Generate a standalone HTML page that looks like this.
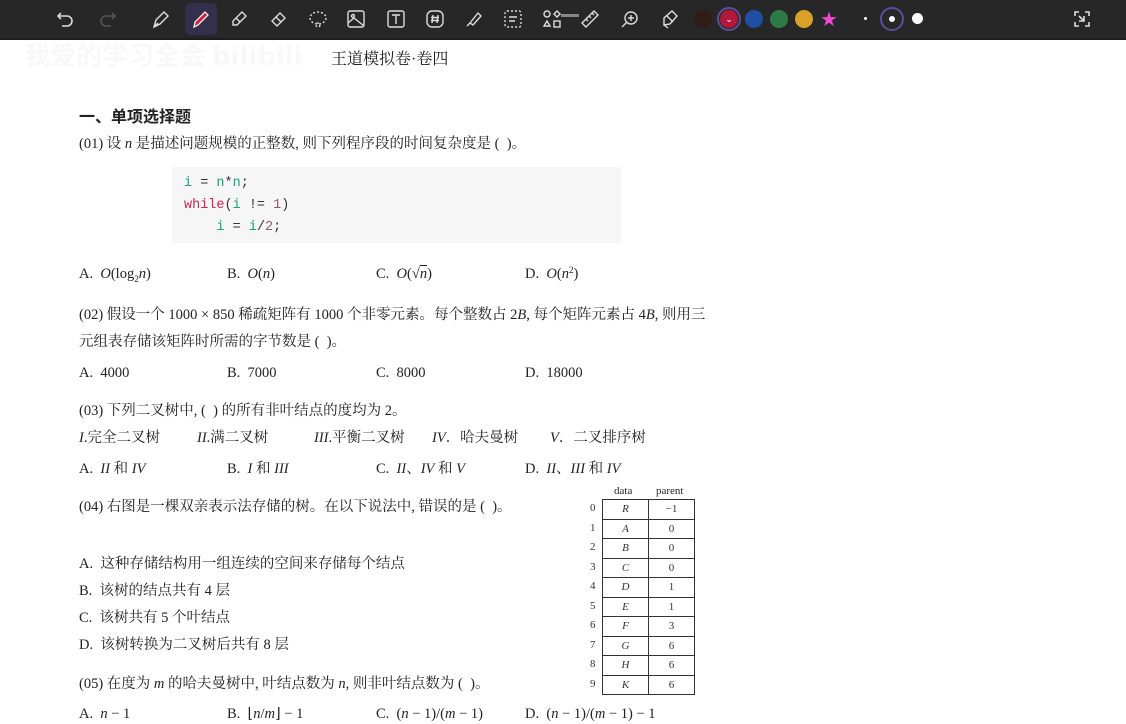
<!DOCTYPE html>
<html><head><meta charset="utf-8">
<style>
html,body{margin:0;padding:0;}
body{width:1126px;height:720px;position:relative;overflow:hidden;background:#fff;}
.tb{position:absolute;left:0;top:0;width:1126px;height:38px;background:#272727;border-bottom:2px solid #1d1d1d;}
.ic{position:absolute;top:7px;width:24px;height:24px;}
.t{position:absolute;white-space:nowrap;font-size:14.5px;line-height:20px;font-family:"Liberation Serif","Noto Serif CJK SC",serif;color:#222;}
i{font-style:italic;}
.sb{position:relative;top:4px;font-size:9px;line-height:0}
.sp{position:relative;top:-5px;font-size:9px;line-height:0}
.code{position:absolute;left:172px;top:167px;width:449px;height:76px;background:#f6f6f6;}
.cl{position:absolute;left:184px;font:13.5px/20px "Liberation Mono",monospace;color:#333;white-space:nowrap;}
.g{color:#1aa37a}.r{color:#c8264f}.p{color:#8a5a6a}
table{position:absolute;left:602px;top:499px;border-collapse:collapse;font:italic 11px "Liberation Serif",serif;color:#333;}
td{border:1px solid #333;height:18.5px;padding:0;text-align:center;}
td.a{width:45px}td.b{width:45px;font-style:normal}
.idx{position:absolute;left:590px;font:11px/19.5px "Liberation Serif",serif;color:#333;}
</style></head><body>
<div class="tb">
<svg class="ic" style="left:53px" viewBox="0 0 24 24" fill="none" stroke="#ddd" stroke-width="1.6"><path d="M8 6 L5 9 L8 12 M5 9 H14 a5 5 0 0 1 0 10 H9"/></svg>
<svg class="ic" style="left:96px" viewBox="0 0 24 24" fill="none" stroke="#555" stroke-width="1.6"><path d="M16 6 L19 9 L16 12 M19 9 H10 a5 5 0 0 0 0 10 H15"/></svg>
<svg class="ic" style="left:149px" viewBox="0 0 24 24" fill="none" stroke="#ddd" stroke-width="1.4"><path d="M5 20 L7 13 L15 5 L19 9 L11 17 Z M5 20 L9 16"/></svg>
<div style="position:absolute;left:185px;top:3px;width:32px;height:32px;background:#34304c;border-radius:5px"></div>
<svg class="ic" style="left:189px" viewBox="0 0 24 24"><path d="M5 20 L6 15 L16 5 L19 8 L9 18 Z" fill="#d0243a" stroke="#fff" stroke-width="1.2"/></svg>
<svg class="ic" style="left:227px" viewBox="0 0 24 24" fill="none" stroke="#ddd" stroke-width="1.4"><path d="M6 18 L6 14 L15 5 L19 9 L10 18 Z M9 11 L13 15"/></svg>
<svg class="ic" style="left:267px" viewBox="0 0 24 24" fill="none" stroke="#ddd" stroke-width="1.4"><path d="M5 14 L13 6 L18 11 L10 19 Z M9 10 L14 15"/></svg>
<svg class="ic" style="left:306px" viewBox="0 0 24 24" fill="none" stroke="#ddd" stroke-width="1.4" stroke-dasharray="2 2"><ellipse cx="12" cy="11" rx="8" ry="6"/><circle cx="12" cy="18" r="2"/></svg>
<svg class="ic" style="left:344px" viewBox="0 0 24 24" fill="none" stroke="#ddd" stroke-width="1.4"><rect x="4" y="4" width="16" height="16" rx="2"/><path d="M4 16 L10 11 L20 19"/><circle cx="9" cy="9" r="1.5"/></svg>
<svg class="ic" style="left:384px" viewBox="0 0 24 24" fill="none" stroke="#ddd" stroke-width="1.4"><rect x="4" y="4" width="16" height="16" rx="2"/><path d="M8 8 H16 M12 8 V17"/></svg>
<svg class="ic" style="left:423px" viewBox="0 0 24 24" fill="none" stroke="#ddd" stroke-width="1.4"><rect x="4" y="4" width="16" height="16" rx="5"/><path d="M10 8 L9 16 M15 8 L14 16 M8 10.5 H16 M8 13.5 H16"/></svg>
<svg class="ic" style="left:462px" viewBox="0 0 24 24" fill="none" stroke="#ddd" stroke-width="1.4"><path d="M8 16 L16 6 L19 9 L11 18 Z M5 19 L8 16"/></svg>
<svg class="ic" style="left:501px" viewBox="0 0 24 24" fill="none" stroke="#ddd" stroke-width="1.4" stroke-dasharray="2 2"><rect x="4" y="4" width="16" height="16" rx="2"/><path d="M8 10 H16 M8 14 H14" stroke-dasharray="none"/></svg>
<svg class="ic" style="left:540px" viewBox="0 0 24 24" fill="none" stroke="#ddd" stroke-width="1.4"><circle cx="7" cy="7" r="3"/><path d="M17 4 L20 7 L17 10 L14 7 Z M7 14 L10 19 H4 Z"/><rect x="14" y="14" width="6" height="6"/></svg>
<div style="position:absolute;left:561px;top:14px;width:18px;height:3px;background:#888"></div>
<svg class="ic" style="left:578px" viewBox="0 0 24 24" fill="none" stroke="#ddd" stroke-width="1.4"><path d="M4 16 L16 4 L20 8 L8 20 Z M8 12 L10 14 M11 9 L13 11 M14 6 L16 8"/></svg>
<svg class="ic" style="left:618px" viewBox="0 0 24 24" fill="none" stroke="#ddd" stroke-width="1.4"><circle cx="13" cy="11" r="6"/><path d="M9 15 L4 20 M13 8 V14 M10 11 H16"/></svg>
<svg class="ic" style="left:658px" viewBox="0 0 24 24" fill="none" stroke="#ddd" stroke-width="1.4"><path d="M6 18 L6 11 L14 4 L19 9 L12 17 Z M9 9 L15 15 M6 18 L10 21"/></svg>
<div style="position:absolute;left:694px;top:10px;width:18px;height:18px;border-radius:50%;background:#2e1d17"></div>
<div style="position:absolute;left:717px;top:7px;width:20px;height:20px;border:2px solid #5a4f9a;border-radius:50%"></div>
<div style="position:absolute;left:720px;top:10px;width:18px;height:18px;border-radius:50%;background:#b3183a;color:#fff;font:9px/18px sans-serif;text-align:center">⌄</div>
<div style="position:absolute;left:745px;top:10px;width:18px;height:18px;border-radius:50%;background:#1e4fa3"></div>
<div style="position:absolute;left:770px;top:10px;width:18px;height:18px;border-radius:50%;background:#2e7a47"></div>
<div style="position:absolute;left:795px;top:10px;width:18px;height:18px;border-radius:50%;background:#d9a127"></div>
<div style="position:absolute;left:820px;top:7px;font:20px/24px 'DejaVu Sans';color:#f048d4">★</div>
<div style="position:absolute;left:864px;top:17px;width:3px;height:3px;border-radius:50%;background:#fff"></div>
<div style="position:absolute;left:880px;top:7px;width:20px;height:20px;border:2px solid #5a4f9a;border-radius:50%"></div>
<div style="position:absolute;left:889px;top:16px;width:6px;height:6px;border-radius:50%;background:#fff"></div>
<div style="position:absolute;left:912px;top:13px;width:11px;height:11px;border-radius:50%;background:#fff"></div>
<svg class="ic" style="left:1070px" viewBox="0 0 24 24" fill="none" stroke="#ddd" stroke-width="1.6"><path d="M5 9 V5 H9 M19 9 V5 H15 M5 15 V19 H9 M19 15 V19 H15 M9 9 L14 14 M14 9 V14 H9"/></svg>
</div>

<div style="position:absolute;left:24px;top:38px;font:bold 26px/34px 'Noto Sans CJK SC',sans-serif;color:#f8f8f8;white-space:nowrap">我爱的学习全会 <span style="font-family:'DejaVu Sans'">bilibili</span></div>

<div class="t" style="left:331px;top:50px;font-size:16px">王道模拟卷·卷四</div>
<div class="t" style="left:79px;top:105px;font-size:16px;font-weight:bold;font-family:'Noto Sans CJK SC',sans-serif">一、单项选择题</div>
<div class="t" style="left:79px;top:134px">(01) 设 <i>n</i> 是描述问题规模的正整数, 则下列程序段的时间复杂度是 (&nbsp;&nbsp;)。</div>

<div class="code"></div>
<div class="cl" style="top:174px"><span class="g">i</span> = <span class="g">n</span>*<span class="g">n</span>;</div>
<div class="cl" style="top:196px"><span class="r">while</span>(<span class="g">i</span> != <span class="p">1</span>)</div>
<div class="cl" style="top:218px">&nbsp;&nbsp;&nbsp;&nbsp;<span class="g">i</span> = <span class="g">i</span>/<span class="p">2</span>;</div>

<div class="t" style="left:79px;top:264px">A.&nbsp; <i>O</i>(log<span class="sb">2</span><i>n</i>)</div>
<div class="t" style="left:227px;top:264px">B.&nbsp; <i>O</i>(<i>n</i>)</div>
<div class="t" style="left:376px;top:264px">C.&nbsp; <i>O</i>(√<span style="text-decoration:overline"><i>n</i></span>)</div>
<div class="t" style="left:525px;top:264px">D.&nbsp; <i>O</i>(<i>n</i><span class="sp">2</span>)</div>

<div class="t" style="left:79px;top:305px">(02) 假设一个 1000 × 850 稀疏矩阵有 1000 个非零元素。每个整数占 2<i>B</i>, 每个矩阵元素占 4<i>B</i>, 则用三</div>
<div class="t" style="left:79px;top:332px">元组表存储该矩阵时所需的字节数是 (&nbsp;&nbsp;)。</div>
<div class="t" style="left:79px;top:363px">A.&nbsp; 4000</div>
<div class="t" style="left:227px;top:363px">B.&nbsp; 7000</div>
<div class="t" style="left:376px;top:363px">C.&nbsp; 8000</div>
<div class="t" style="left:525px;top:363px">D.&nbsp; 18000</div>

<div class="t" style="left:79px;top:401px">(03) 下列二叉树中, (&nbsp;&nbsp;) 的所有非叶结点的度均为 2。</div>
<div class="t" style="left:79px;top:428px"><i>I</i>.完全二叉树</div>
<div class="t" style="left:197px;top:428px"><i>II</i>.满二叉树</div>
<div class="t" style="left:314px;top:428px"><i>III</i>.平衡二叉树</div>
<div class="t" style="left:432px;top:428px"><i>IV</i>．哈夫曼树</div>
<div class="t" style="left:550px;top:428px"><i>V</i>．二叉排序树</div>
<div class="t" style="left:79px;top:459px">A.&nbsp; <i>II</i> 和 <i>IV</i></div>
<div class="t" style="left:227px;top:459px">B.&nbsp; <i>I</i> 和 <i>III</i></div>
<div class="t" style="left:376px;top:459px">C.&nbsp; <i>II</i>、<i>IV</i> 和 <i>V</i></div>
<div class="t" style="left:525px;top:459px">D.&nbsp; <i>II</i>、<i>III</i> 和 <i>IV</i></div>

<div class="t" style="left:79px;top:497px">(04) 右图是一棵双亲表示法存储的树。在以下说法中, 错误的是 (&nbsp;&nbsp;)。</div>
<div class="t" style="left:79px;top:554px">A.&nbsp; 这种存储结构用一组连续的空间来存储每个结点</div>
<div class="t" style="left:79px;top:581px">B.&nbsp; 该树的结点共有 4 层</div>
<div class="t" style="left:79px;top:608px">C.&nbsp; 该树共有 5 个叶结点</div>
<div class="t" style="left:79px;top:635px">D.&nbsp; 该树转换为二叉树后共有 8 层</div>

<div class="t" style="left:614px;top:481px;font-size:11px">data</div>
<div class="t" style="left:656px;top:481px;font-size:11px">parent</div>
<div class="idx" style="top:499px">0<br>1<br>2<br>3<br>4<br>5<br>6<br>7<br>8<br>9</div>
<table>
<tr><td class="a">R</td><td class="b">−1</td></tr>
<tr><td class="a">A</td><td class="b">0</td></tr>
<tr><td class="a">B</td><td class="b">0</td></tr>
<tr><td class="a">C</td><td class="b">0</td></tr>
<tr><td class="a">D</td><td class="b">1</td></tr>
<tr><td class="a">E</td><td class="b">1</td></tr>
<tr><td class="a">F</td><td class="b">3</td></tr>
<tr><td class="a">G</td><td class="b">6</td></tr>
<tr><td class="a">H</td><td class="b">6</td></tr>
<tr><td class="a">K</td><td class="b">6</td></tr>
</table>

<div class="t" style="left:79px;top:674px">(05) 在度为 <i>m</i> 的哈夫曼树中, 叶结点数为 <i>n</i>, 则非叶结点数为 (&nbsp;&nbsp;)。</div>
<div class="t" style="left:79px;top:704px">A.&nbsp; <i>n</i> − 1</div>
<div class="t" style="left:227px;top:704px">B.&nbsp; ⌊<i>n</i>/<i>m</i>⌋ − 1</div>
<div class="t" style="left:376px;top:704px">C.&nbsp; (<i>n</i> − 1)/(<i>m</i> − 1)</div>
<div class="t" style="left:525px;top:704px">D.&nbsp; (<i>n</i> − 1)/(<i>m</i> − 1) − 1</div>
</body></html>
